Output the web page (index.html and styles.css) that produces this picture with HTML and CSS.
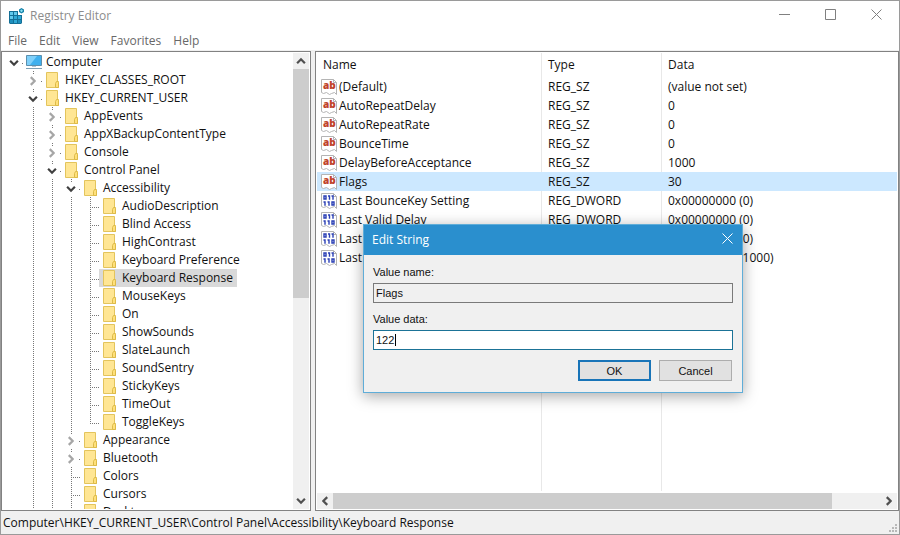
FILE: index.html
```html
<!DOCTYPE html>
<html lang="en">
<head>
  <meta charset="UTF-8" />
  <meta name="viewport" content="width=device-width, initial-scale=1.0" />
  <title>Registry Editor</title>
  <link rel="stylesheet" href="styles.css">
</head>
<body>
  <!-- Shared icons -->
  <svg class="sprite" aria-hidden="true">
    <symbol id="chevron" viewBox="0 0 9 9"><path d="M1 2.5 4.5 6 8 2.5" fill="none" stroke="currentColor" stroke-width="2"/></symbol>
    <symbol id="folder" viewBox="0 0 16 16">
      <path d="M1.5.5h11v9h1v6h-12z" fill="#ffe694" stroke="#e3c45c"/>
      <path d="M10.5 15.5v-4l1-2h1.500l.5 1v5z" fill="#ffe07a" stroke="#dcba48"/>
    </symbol>
    <symbol id="computer" viewBox="0 0 16 16">
      <path d="M.5 1.500h15v10H.5z" fill="#3fb0ee" stroke="#5b8fae"/>
      <path d="M1 2h10L4 11H1z" fill="#7fd0fa"/>
      <path d="M6 12h4v1H6z" fill="#b5c6d0"/>
      <path d="M0 14h16v1H0z" fill="#7d9fb4"/>
    </symbol>
    <symbol id="string" viewBox="0 0 16 16">
      <path d="M.5.5h12l3 3v12l-2-2-3 1-2 1-3-2-3 1-2-1z" fill="#fff" stroke="#b4b4b4"/>
      <path d="M12.500.5v3h3" fill="none" stroke="#b4b4b4"/>
      <text x="2" y="10" font-family="Open Sans, sans-serif" font-size="10" font-weight="800" fill="#c0432b">ab</text>
    </symbol>
    <symbol id="binary" viewBox="0 0 16 16">
      <path d="M.5.5h12l3 3v12l-2-2-3 1-2 1-3-2-3 1-2-1z" fill="#fff" stroke="#b4b4b4"/>
      <path d="M12.500.5v3h3" fill="none" stroke="#b4b4b4"/>
      <!-- 011 over 110 -->
      <path d="M3 3h2v3H3zM11 9h2v3h-2z" fill="none" stroke="#2a3fb5" stroke-width="1.400"/>
      <path d="M7 3h1.500v3.700M10.500 3H12v3.700M2.500 9H4v3.700M6.500 9H8v3.700" fill="none" stroke="#2a3fb5" stroke-width="1.400"/>
    </symbol>
  </svg>

  <div class="window">
    <header class="titlebar">
      <svg class="app-icon" viewBox="0 0 16 16">
        <path d="M0 3h9v4h4v8l-1 1H1l-1-1z" fill="#146f96"/>
        <path d="M1 4h3v3H1zM5 4h3v3H5zM1 8h3v3H1z" fill="#62c9ec"/>
        <path d="M5 8h3v3H5zM9 8h3v3H9zM5 12h3v3H5z" fill="#2fa9d6"/>
        <path d="M1 12h3v3H1zM9 12h3v3H9z" fill="#1e8fbd"/>
        <path d="m12.500 0 2.500 1.500v2.500l-2.500 1.500L10 4V1.500z" fill="#1683aa"/>
        <path d="M12.500 1.200 14 2.700l-1.500 1.500L11 2.700z" fill="#8be0f3"/>
      </svg>
      <h1>Registry Editor</h1>
      <div class="window-buttons">
        <button type="button" aria-label="Minimize"><svg viewBox="0 0 11 11"><path d="M0 5.500h11"/></svg></button>
        <button type="button" aria-label="Maximize"><svg viewBox="0 0 11 11"><path d="M.5.5h10v10H.5z"/></svg></button>
        <button type="button" aria-label="Close"><svg viewBox="0 0 11 11"><path d="m.5.5 10 10M10.500.5l-10 10"/></svg></button>
      </div>
    </header>

    <nav class="menubar">
      <button type="button">File</button>
      <button type="button">Edit</button>
      <button type="button">View</button>
      <button type="button">Favorites</button>
      <button type="button">Help</button>
    </nav>

    <main class="panes">
      <!-- Key tree -->
      <section class="pane tree-pane">
        <div class="tree-view">
          <ul class="tree" id="tree"></ul>
        </div>
        <div class="scrollbar vertical">
          <button type="button" class="up" aria-label="Scroll up"><svg><use href="#chevron"/></svg></button>
          <div class="track"><div class="thumb"></div></div>
          <button type="button" class="down" aria-label="Scroll down"><svg><use href="#chevron"/></svg></button>
        </div>
      </section>

      <!-- Values of the selected key -->
      <section class="pane list-pane">
        <div class="list-view">
          <table>
            <colgroup><col class="col-name"><col class="col-type"><col></colgroup>
            <thead>
              <tr><th>Name</th><th>Type</th><th>Data</th></tr>
            </thead>
            <tbody id="values"></tbody>
          </table>
        </div>
        <div class="scrollbar horizontal">
          <button type="button" class="left" aria-label="Scroll left"><svg><use href="#chevron"/></svg></button>
          <div class="track"><div class="thumb"></div></div>
          <button type="button" class="right" aria-label="Scroll right"><svg><use href="#chevron"/></svg></button>
        </div>
      </section>
    </main>

    <footer class="statusbar">
      <span>Computer\HKEY_CURRENT_USER\Control Panel\Accessibility\Keyboard Response</span>
      <svg class="grip" viewBox="0 0 8 8"><path d="M6 0h2v2H6zM3 3h2v2H3zM6 3h2v2H6zM0 6h2v2H0zM3 6h2v2H3zM6 6h2v2H6z"/></svg>
    </footer>

    <!-- Edit String dialog -->
    <form class="dialog" role="dialog" aria-labelledby="dialogTitle">
      <div class="dialog-title">
        <h2 id="dialogTitle">Edit String</h2>
        <button type="button" aria-label="Close"><svg viewBox="0 0 11 11"><path d="m.5.5 10 10M10.500.5l-10 10"/></svg></button>
      </div>
      <div class="dialog-body">
        <label for="valueName">Value name:</label>
        <input type="text" id="valueName" value="Flags" readonly>
        <label for="valueData">Value data:</label>
        <input type="text" id="valueData" class="editing" value="122">
        <div class="dialog-actions">
          <button type="submit" class="default">OK</button>
          <button type="button">Cancel</button>
        </div>
      </div>
    </form>
  </div>

  <script src="script.js"></script>
</body>
</html>
```

FILE: script.js
```js
const keys = [
  { name: "Computer", icon: "computer", open: true, children: [
    { name: "HKEY_CLASSES_ROOT", children: [] },
    { name: "HKEY_CURRENT_USER", open: true, more: true, children: [
      { name: "AppEvents", children: [] },
      { name: "AppXBackupContentType", children: [] },
      { name: "Console", children: [] },
      { name: "Control Panel", open: true, more: true, children: [
        { name: "Accessibility", open: true, children: [
          { name: "AudioDescription" },
          { name: "Blind Access" },
          { name: "HighContrast" },
          { name: "Keyboard Preference" },
          { name: "Keyboard Response", selected: true },
          { name: "MouseKeys" },
          { name: "On" },
          { name: "ShowSounds" },
          { name: "SlateLaunch" },
          { name: "SoundSentry" },
          { name: "StickyKeys" },
          { name: "TimeOut" },
          { name: "ToggleKeys" }
        ] },
        { name: "Appearance", children: [] },
        { name: "Bluetooth", children: [] },
        { name: "Colors" },
        { name: "Cursors" },
        { name: "Desktop", more: true }
      ] }
    ] }
  ] }
];

const values = [
  ["(Default)", "REG_SZ", "(value not set)"],
  ["AutoRepeatDelay", "REG_SZ", "0"],
  ["AutoRepeatRate", "REG_SZ", "0"],
  ["BounceTime", "REG_SZ", "0"],
  ["DelayBeforeAcceptance", "REG_SZ", "1000"],
  ["Flags", "REG_SZ", "30"],
  ["Last BounceKey Setting", "REG_DWORD", "0x00000000 (0)"],
  ["Last Valid Delay", "REG_DWORD", "0x00000000 (0)"],
  ["Last Valid Repeat", "REG_DWORD", "0x00000000 (0)"],
  ["Last Valid Wait", "REG_DWORD", "0x000003e8 (1000)"]
];

function renderKey(key) {
  const toggle = key.children
    ? `<button type="button" class="toggle ${key.open ? "open" : ""}" aria-label="Toggle ${key.name}"><svg><use href="#chevron"/></svg></button>`
    : "";
  const children = key.open ? `<ul>${key.children.map(renderKey).join("")}</ul>` : "";
  return `
    <li class="${key.more ? "more" : ""}">
      <div class="node">
        <span class="branch">${toggle}</span>
        <a href="#" class="key ${key.selected ? "selected" : ""}"><svg><use href="#${key.icon || "folder"}"/></svg>${key.name}</a>
      </div>
      ${children}
    </li>`;
}

document.getElementById("tree").innerHTML = keys.map(renderKey).join("");

document.getElementById("values").innerHTML = values.map(([name, type, data]) => `
  <tr class="${name === "Flags" ? "selected" : ""}">
    <td><svg><use href="#${type === "REG_SZ" ? "string" : "binary"}"/></svg>${name}</td>
    <td>${type}</td>
    <td>${data}</td>
  </tr>`).join("");
```

FILE: styles.css
```css
* {
  margin: 0;
  padding: 0;
  box-sizing: border-box;
}
body {
  font-family: "Open Sans", "Noto Sans", sans-serif;
  font-size: 12px;
  line-height: 18px;
  color: #111;
  background: #fff;
}
button {
  font: inherit;
  color: inherit;
  border: none;
  background: none;
}
ul {
  list-style: none;
}
.sprite {
  display: none;
}
.window {
  position: relative;
  display: flex;
  flex-direction: column;
  height: 100vh;
  border: 1px solid #9a9a9a;
  background: #fff;
  overflow: hidden;
}

/* Title bar and menu */
.titlebar {
  display: flex;
  align-items: center;
  height: 30px;
  padding-left: 8px;
}
.app-icon {
  width: 16px;
  height: 16px;
  margin-right: 5px;
}
.titlebar h1 {
  flex: 1;
  font-size: 12px;
  font-weight: 400;
  color: #8c8c8c;
}
.window-buttons {
  display: flex;
}
.window-buttons button {
  width: 46px;
  height: 30px;
}
.window-buttons svg,
.dialog-title svg {
  width: 11px;
  height: 11px;
  fill: none;
  stroke: #808080;
}
.menubar {
  display: flex;
  gap: 12px;
  padding: 0 7px;
  height: 19px;
  color: #686868;
}

/* Panes */
.panes {
  flex: 1;
  display: flex;
  gap: 4px;
  min-height: 0;
  padding-top: 1px;
  background: #f0f0f0;
}
.pane {
  display: flex;
  min-width: 0;
  border: 1px solid #828282;
  background: #fff;
  padding: 1px;
}
.tree-pane {
  flex: 0 0 310px;
}
.list-pane {
  flex: 1;
  flex-direction: column;
}
.tree-view {
  flex: 1;
  overflow: hidden;
}
.tree ul {
  margin-left: 19px;
}
.tree ul > li {
  background: repeating-linear-gradient(to bottom, #777 0 1px, transparent 1px 2px) 11px 0 / 1px 100% no-repeat;
}
.tree ul > li:last-child:not(.more) {
  background-size: 1px 10px;
}
.node {
  display: flex;
  height: 18px;
}
.branch {
  width: 20px;
  background: repeating-linear-gradient(to right, #777 0 1px, transparent 1px 2px) 11px 10px / 11px 1px no-repeat;
}
.toggle {
  display: flex;
  align-items: center;
  justify-content: center;
  width: 15px;
  height: 14px;
  margin-top: 3px;
  margin-left: 3px;
  color: #a6a6a6;
  background: #fff;
}
.toggle svg {
  width: 10px;
  height: 10px;
  transform: rotate(-90deg);
}
.toggle.open {
  color: #404040;
}
.toggle.open svg {
  transform: none;
}
.key {
  display: flex;
  align-items: center;
  gap: 4px;
  padding: 0 4px 0 3px;
  color: inherit;
  text-decoration: none;
  white-space: nowrap;
}
.key svg {
  width: 16px;
  height: 16px;
}
.key.selected {
  background: #d9d9d9;
}

/* Scrollbars */
.scrollbar {
  display: flex;
  background: #f0f0f0;
}
.scrollbar button {
  display: flex;
  align-items: center;
  justify-content: center;
  width: 16px;
  height: 16px;
  color: #505050;
}
.scrollbar svg {
  width: 10px;
  height: 10px;
}
.scrollbar .track {
  display: flex;
  flex: 1;
}
.scrollbar .thumb {
  background: #cdcdcd;
}
.vertical,
.vertical .track {
  flex-direction: column;
}
.vertical .thumb {
  height: 54%;
}
.horizontal .thumb {
  width: 91%;
}
.up svg {
  transform: rotate(180deg);
}
.left svg {
  transform: rotate(90deg);
}
.right svg {
  transform: rotate(-90deg);
}

/* Value list */
.list-view {
  flex: 1;
  margin-bottom: 2px;
  overflow: hidden;
  background:
    linear-gradient(#e8e8e8, #e8e8e8) 224px 0 / 1px 100% no-repeat,
    linear-gradient(#e8e8e8, #e8e8e8) 344px 0 / 1px 100% no-repeat;
}
table {
  width: 100%;
  table-layout: fixed;
  border-collapse: collapse;
}
.col-name {
  width: 225px;
}
.col-type {
  width: 120px;
}
th {
  height: 24px;
  padding-left: 6px;
  font-weight: 400;
  text-align: left;
}
td {
  height: 19px;
  padding-left: 6px;
  white-space: nowrap;
}
td:first-child {
  display: flex;
  align-items: center;
  gap: 2px;
  padding-left: 4px;
}
td svg {
  width: 16px;
  height: 16px;
}
tr.selected {
  background: #cce8ff;
}

/* Status bar */
.statusbar {
  display: flex;
  justify-content: space-between;
  height: 23px;
  padding: 3px 2px 2px;
  background: #f0f0f0;
}
.grip {
  align-self: flex-end;
  width: 8px;
  height: 8px;
  fill: #b8b8b8;
}

/* Dialog */
.dialog {
  position: absolute;
  top: 223px;
  left: 362px;
  width: 380px;
  border: 1px solid #5fadd8;
  background: #f0f0f0;
  box-shadow: 0 3px 14px rgba(0, 0, 0, 0.35);
}
.dialog-title {
  display: flex;
  align-items: center;
  justify-content: space-between;
  height: 30px;
  padding-left: 8px;
  color: #fff;
  background: #2a8fce;
}
.dialog-title h2 {
  font-size: 12px;
  font-weight: 400;
}
.dialog-title button {
  width: 30px;
  height: 30px;
}
.dialog-title svg {
  stroke: #fff;
}
.dialog-body {
  display: flex;
  flex-direction: column;
  padding: 8px 9px 11px;
  font-family: "Liberation Sans", Arial, sans-serif;
  font-size: 11px;
}
.dialog-body label {
  margin-bottom: 2px;
}
.dialog-body input {
  height: 20px;
  margin-bottom: 7px;
  padding: 0 2px;
  font: inherit;
  color: #111;
  border: 1px solid #7a7a7a;
  background: #f0f0f0;
  outline: none;
}
/* Field being edited, with its text cursor */
.dialog-body .editing {
  border-color: #1b7397;
  background: linear-gradient(#000, #000) 21px 3px / 1px 12px no-repeat #fff;
}
.dialog-actions {
  display: flex;
  justify-content: flex-end;
  gap: 8px;
  padding-top: 3px;
  padding-right: 1px;
}
.dialog-actions button {
  width: 73px;
  height: 21px;
  border: 1px solid #adadad;
  background: #e1e1e1;
}
.dialog-actions .default {
  border: 2px solid #1874b8;
}
```
